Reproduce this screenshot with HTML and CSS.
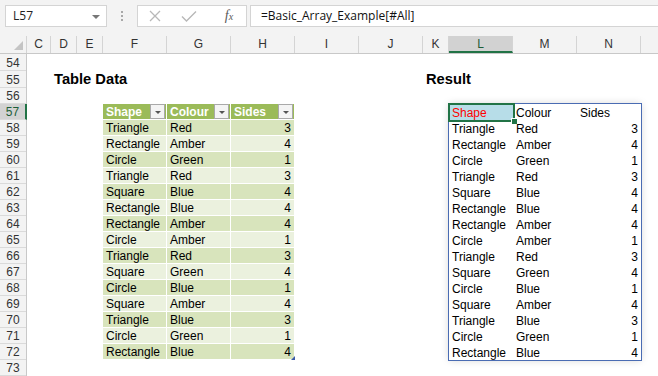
FILE: index.html
```html
<!DOCTYPE html>
<html>
<head>
    <meta charset="utf-8">
    <link rel="stylesheet" href="styles.css">
</head>
<body>
    <div class="ribbon">
        <div class="namebox">L57<span class="drop"></span></div>
        <div class="dots"><span></span><span></span><span></span></div>
        <div class="fbuttons">
            <div class="fbtn"><svg width="12" height="12" viewBox="0 0 12 12"><path d="M1 1L11 11M11 1L1 11" stroke="#b8b8b8" stroke-width="1.3" fill="none"/></svg></div>
            <div class="fbtn"><svg width="16" height="12" viewBox="0 0 16 12"><path d="M1 6.5L5.5 11L15 1.5" stroke="#b8b8b8" stroke-width="1.4" fill="none"/></svg></div>
            <div class="fbtn fx"><i>f</i><sub>x</sub></div>
        </div>
        <div class="formula">=Basic_Array_Example[#All]</div>
    </div>

    <div class="colheads">
        <div class="corner"></div>
        <div class="ch w24">C</div>
        <div class="ch w26">D</div>
        <div class="ch w26">E</div>
        <div class="ch w64">F</div>
        <div class="ch w64">G</div>
        <div class="ch w64">H</div>
        <div class="ch w64">I</div>
        <div class="ch w64">J</div>
        <div class="ch w26">K</div>
        <div class="ch w64 sel">L</div>
        <div class="ch w64">M</div>
        <div class="ch w64">N</div>
        <div class="ch rest"></div>
    </div>

    <div class="sheet">
        <div class="rowheads">
            <div class="rh h17">54</div>
            <div class="rh h17">55</div>
            <div class="rh">56</div>
            <div class="rh sel">57</div>
            <div class="rh">58</div>
            <div class="rh">59</div>
            <div class="rh">60</div>
            <div class="rh">61</div>
            <div class="rh">62</div>
            <div class="rh">63</div>
            <div class="rh">64</div>
            <div class="rh">65</div>
            <div class="rh">66</div>
            <div class="rh">67</div>
            <div class="rh">68</div>
            <div class="rh">69</div>
            <div class="rh">70</div>
            <div class="rh">71</div>
            <div class="rh">72</div>
            <div class="rh">73</div>
        </div>

        <div class="grid">
            <div class="blank h17"></div>
            <div class="titles">
                <div class="title t-left">Table Data</div>
                <div class="title">Result</div>
            </div>
            <div class="blank h16"></div>

            <div class="blocks">
                <div class="tbl">
                    <div class="tr head">
                        <div class="td">Shape<span class="flt"></span></div>
                        <div class="td">Colour<span class="flt"></span></div>
                        <div class="td">Sides<span class="flt"></span></div>
                    </div>
                    <div class="tr"><div class="td">Triangle</div><div class="td">Red</div><div class="td num">3</div></div>
                    <div class="tr"><div class="td">Rectangle</div><div class="td">Amber</div><div class="td num">4</div></div>
                    <div class="tr"><div class="td">Circle</div><div class="td">Green</div><div class="td num">1</div></div>
                    <div class="tr"><div class="td">Triangle</div><div class="td">Red</div><div class="td num">3</div></div>
                    <div class="tr"><div class="td">Square</div><div class="td">Blue</div><div class="td num">4</div></div>
                    <div class="tr"><div class="td">Rectangle</div><div class="td">Blue</div><div class="td num">4</div></div>
                    <div class="tr"><div class="td">Rectangle</div><div class="td">Amber</div><div class="td num">4</div></div>
                    <div class="tr"><div class="td">Circle</div><div class="td">Amber</div><div class="td num">1</div></div>
                    <div class="tr"><div class="td">Triangle</div><div class="td">Red</div><div class="td num">3</div></div>
                    <div class="tr"><div class="td">Square</div><div class="td">Green</div><div class="td num">4</div></div>
                    <div class="tr"><div class="td">Circle</div><div class="td">Blue</div><div class="td num">1</div></div>
                    <div class="tr"><div class="td">Square</div><div class="td">Amber</div><div class="td num">4</div></div>
                    <div class="tr"><div class="td">Triangle</div><div class="td">Blue</div><div class="td num">3</div></div>
                    <div class="tr"><div class="td">Circle</div><div class="td">Green</div><div class="td num">1</div></div>
                    <div class="tr"><div class="td">Rectangle</div><div class="td">Blue</div><div class="td num last">4</div></div>
                </div>

                <div class="result">
                    <div class="tr"><div class="td active">Shape</div><div class="td">Colour</div><div class="td">Sides</div></div>
                    <div class="tr"><div class="td">Triangle</div><div class="td">Red</div><div class="td num">3</div></div>
                    <div class="tr"><div class="td">Rectangle</div><div class="td">Amber</div><div class="td num">4</div></div>
                    <div class="tr"><div class="td">Circle</div><div class="td">Green</div><div class="td num">1</div></div>
                    <div class="tr"><div class="td">Triangle</div><div class="td">Red</div><div class="td num">3</div></div>
                    <div class="tr"><div class="td">Square</div><div class="td">Blue</div><div class="td num">4</div></div>
                    <div class="tr"><div class="td">Rectangle</div><div class="td">Blue</div><div class="td num">4</div></div>
                    <div class="tr"><div class="td">Rectangle</div><div class="td">Amber</div><div class="td num">4</div></div>
                    <div class="tr"><div class="td">Circle</div><div class="td">Amber</div><div class="td num">1</div></div>
                    <div class="tr"><div class="td">Triangle</div><div class="td">Red</div><div class="td num">3</div></div>
                    <div class="tr"><div class="td">Square</div><div class="td">Green</div><div class="td num">4</div></div>
                    <div class="tr"><div class="td">Circle</div><div class="td">Blue</div><div class="td num">1</div></div>
                    <div class="tr"><div class="td">Square</div><div class="td">Amber</div><div class="td num">4</div></div>
                    <div class="tr"><div class="td">Triangle</div><div class="td">Blue</div><div class="td num">3</div></div>
                    <div class="tr"><div class="td">Circle</div><div class="td">Green</div><div class="td num">1</div></div>
                    <div class="tr"><div class="td">Rectangle</div><div class="td">Blue</div><div class="td num">4</div></div>
                </div>
            </div>
        </div>
    </div>
</body>
</html>
```

FILE: styles.css
```css
body {
    margin: 0;
    width: 658px;
    height: 376px;
    overflow: hidden;
    background-color: #fff;
    font-family: "Liberation Sans", Arial, sans-serif;
    font-size: 12px;
    color: #000;
}

/* formula bar */
.ribbon {
    display: flex;
    height: 36px;
    padding-top: 5px;
    box-sizing: border-box;
    background-color: #f3f3f3;
    font-family: "Open Sans", sans-serif;
    font-size: 12px;
}

.namebox {
    position: relative;
    width: 102px;
    height: 22px;
    margin-left: 5px;
    padding-left: 7px;
    box-sizing: border-box;
    border: 1px solid #d4d4d4;
    background-color: #fff;
    line-height: 20px;
    color: #222;
}

.drop {
    position: absolute;
    right: 6px;
    top: 9px;
    border-left: 4px solid transparent;
    border-right: 4px solid transparent;
    border-top: 4px solid #777;
}

.dots {
    width: 30px;
    display: flex;
    flex-direction: column;
    align-items: center;
    gap: 2px;
    padding-top: 6px;
    box-sizing: border-box;
}

.dots span {
    width: 2px;
    height: 2px;
    background-color: #a8a8a8;
}

.fbuttons {
    display: flex;
    width: 110px;
    height: 22px;
    box-sizing: border-box;
    border: 1px solid #d4d4d4;
    background-color: #fff;
}

.fbtn {
    flex: 1;
    display: flex;
    align-items: center;
    justify-content: center;
}

.fx {
    font-family: "Liberation Serif", serif;
    font-size: 14px;
    color: #5a5a5a;
    padding-left: 6px;
}

.fx sub {
    font-size: 10px;
    font-style: italic;
    vertical-align: -1px;
}

.formula {
    flex: 1;
    height: 22px;
    margin-left: 3px;
    padding-left: 10px;
    box-sizing: border-box;
    border: 1px solid #d4d4d4;
    border-right: none;
    background-color: #fff;
    line-height: 20px;
    color: #111;
}

/* column headers */
.colheads {
    display: flex;
    height: 18px;
    background-color: #f3f3f3;
    border-bottom: 1px solid #c8c8c8;
    box-sizing: border-box;
    color: #333;
}

.corner {
    position: relative;
    width: 27px;
    flex-shrink: 0;
    border-right: 1px solid #d4d4d4;
    box-sizing: border-box;
}

.corner::after {
    content: "";
    position: absolute;
    right: 3px;
    bottom: 3px;
    border-left: 9px solid transparent;
    border-bottom: 9px solid #c4c4c4;
}

.ch {
    flex-shrink: 0;
    box-sizing: border-box;
    border-right: 1px solid #d4d4d4;
    text-align: center;
    line-height: 17px;
}

.w24 { width: 24px; }
.w26 { width: 26px; }
.w64 { width: 64px; }
.rest { flex: 1; border-right: none; }

.ch.sel {
    background-color: #d2d2d2;
    border-bottom: 2px solid #217346;
    color: #1d5e38;
    line-height: 16px;
}

/* sheet */
.sheet {
    display: flex;
}

.rowheads {
    width: 27px;
    flex-shrink: 0;
    background-color: #f3f3f3;
    border-right: 1px solid #c8c8c8;
    box-sizing: border-box;
    color: #333;
}

.rh {
    height: 16px;
    padding-top: 1px;
    box-sizing: border-box;
    border-bottom: 1px solid #dadada;
    text-align: center;
    line-height: 15px;
}

.rh.h17 {
    height: 17px;
    line-height: 16px;
}

.rh.sel {
    background-color: #d2d2d2;
    border-right: 2px solid #217346;
    margin-right: -1px;
    color: #1d5e38;
}

.grid {
    flex: 1;
    min-width: 0;
}

.blank.h17 { height: 17px; }
.blank.h16 { height: 16px; }

.titles {
    display: flex;
    height: 17px;
    align-items: flex-end;
}

.title {
    font-size: 14.7px;
    font-weight: bold;
    line-height: 17px;
    padding-left: 3px;
    padding-top: 1px;
    box-sizing: border-box;
}

.title.t-left {
    margin-left: 24px;
    width: 372px;
}

.blocks {
    display: flex;
    padding-left: 76px;
    gap: 154px;
}

.tbl, .result {
    width: 192px;
    flex-shrink: 0;
}

.tr {
    display: flex;
    height: 16px;
}

.td {
    position: relative;
    width: 64px;
    height: 16px;
    padding: 1px 3px 0;
    box-sizing: border-box;
    line-height: 16px;
    white-space: nowrap;
}

.td.num {
    text-align: right;
}

/* source table */
.tbl .td {
    border-right: 1px solid #fff;
    border-bottom: 1px solid #fff;
    background-color: #ebf1de;
    line-height: 15px;
}

.tbl .tr:nth-child(even) .td {
    background-color: #d8e4bc;
}

.tbl .tr.head .td {
    background-color: #9bbb59;
    color: #fff;
    font-weight: bold;
}

.flt {
    position: absolute;
    right: 1px;
    top: 0;
    width: 15px;
    height: 15px;
    box-sizing: border-box;
    border: 1px solid #a9a9a9;
    background-color: #f4f4f4;
}

.flt::after {
    content: "";
    position: absolute;
    left: 4px;
    top: 6px;
    border-left: 3px solid transparent;
    border-right: 3px solid transparent;
    border-top: 3px solid #555;
}

.td.last::after {
    content: "";
    position: absolute;
    right: -1px;
    bottom: -1px;
    border-left: 4px solid transparent;
    border-bottom: 4px solid #3b5ba8;
}

/* spilled result */
.result {
    outline: 1px solid #4a6cb3;
    box-shadow: 0 0 8px rgba(0, 0, 0, 0.18);
    background-color: #fff;
}

.td.active {
    background-color: #b7dde8;
    color: #ff0000;
}

.td.active::before {
    content: "";
    position: absolute;
    left: -1px;
    top: -1px;
    right: -2px;
    bottom: -2px;
    border: 2px solid #217346;
}

.td.active::after {
    content: "";
    position: absolute;
    right: -5px;
    bottom: -5px;
    width: 5px;
    height: 5px;
    background-color: #217346;
    border: 1px solid #fff;
}
```
